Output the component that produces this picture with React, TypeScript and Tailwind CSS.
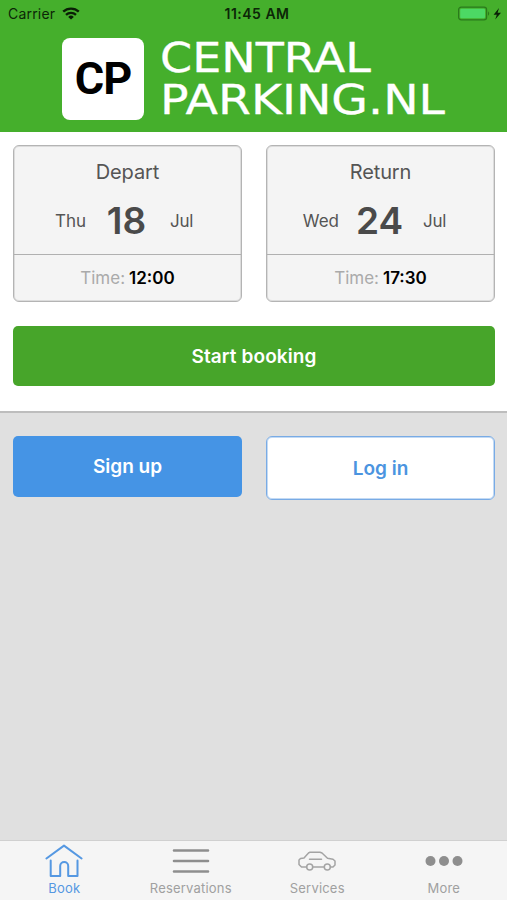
import clsx from "clsx";
import type { ReactNode } from "react";

interface DateCardProps {
  title: string;
  weekday: string;
  day: string;
  month: string;
  time: string;
}

interface TabProps {
  label: string;
  icon: ReactNode;
  active?: boolean;
}

function StatusBar() {
  return (
    <div className="grid h-[27px] grid-cols-3 items-center pr-1 pl-2 text-[14px] text-[#0c2607]">
      <div className="flex items-center gap-[7px]">
        <span className="tracking-[0.2px]">Carrier</span>
        <svg width="18" height="13" viewBox="0 0 18 13" fill="none" stroke="#0a1f06" strokeWidth="2.3">
          <path d="M1.2 4.7a11.2 11.2 0 0 1 15.6 0" />
          <path d="M4 7.9a7.2 7.2 0 0 1 10 0" />
          <path d="M9 12.6 6.2 9.9a4 4 0 0 1 5.6 0Z" fill="#0a1f06" stroke="none" />
        </svg>
      </div>
      <span className="pl-[3px] text-center font-semibold tracking-[0.5px] whitespace-nowrap">11:45 AM</span>
      <svg className="justify-self-end" width="46" height="16" viewBox="0 0 46 16">
        <rect x="1.6" y="1.2" width="28" height="12.6" rx="2.6" fill="none" stroke="#2a7a1c" strokeWidth="1.2" />
        <rect x="3.2" y="2.8" width="24.8" height="9.4" rx="1.2" fill="#4cd964" />
        <path d="M31 5.2q2.4 2.300 0 4.600Z" fill="#2a7a1c" />
        <path d="M42 2 36.600 8.800h3.200L38.200 13.600 44 6.800h-3.400Z" fill="#0a1f06" />
      </svg>
    </div>
  );
}

function Logo() {
  return (
    <div className="flex gap-4 pt-[10.5px] pl-[62px]">
      <div className="flex size-[82px] items-center justify-center rounded-lg bg-white font-[Roboto,sans-serif] text-[45px] leading-none font-bold tracking-[-1px] text-black">
        CP
      </div>
      <svg
        className="-mt-2 overflow-visible"
        width="300"
        height="100"
        viewBox="0 -8 300 100"
        fill="#fff"
        stroke="#fff"
        strokeWidth="0.3"
        fontFamily="'DejaVu Sans', sans-serif"
        fontSize="40"
      >
        <text x="0" y="33.500" textLength="211" lengthAdjust="spacingAndGlyphs">CENTRAL</text>
        <text x="0" y="76" textLength="285" lengthAdjust="spacingAndGlyphs">PARKING.NL</text>
      </svg>
    </div>
  );
}

function DateCard({ title, weekday, day, month, time }: DateCardProps) {
  return (
    <div className="h-[157px] w-[229px] rounded-md border border-[#b4b4b4] bg-[#f4f4f4] text-[#555] shadow-[inset_0_0_0_1px_#dcdcdc]">
      <div className="flex h-[109px] flex-col items-center border-b border-[#b0b0b0] pt-3">
        <div className="text-[20px] leading-7 tracking-[-0.1px]">{title}</div>
        <div className="mt-[10px] grid w-full grid-cols-[72px_81px_1fr] items-center leading-[50px]">
          <span className="text-right text-[17px]">{weekday}</span>
          <span className="text-center text-[37px] font-semibold text-[#4a4a4a]">{day}</span>
          <span className="pl-[3px] text-[17px] tracking-[-0.3px]">{month}</span>
        </div>
      </div>
      <div className="flex h-[47px] items-center justify-center gap-1 text-[17px]">
        <span className="text-[#aaa]">Time:</span>
        <span className="font-semibold text-black">{time}</span>
      </div>
    </div>
  );
}

function Tab({ label, icon, active }: TabProps) {
  return (
    <div className={clsx("flex flex-1 flex-col items-center", active ? "text-[#5598e2]" : "text-[#a0a0a0]")}>
      <div className="flex h-[39px] items-center">{icon}</div>
      <span className="text-[13px] leading-[17px] tracking-[0.2px]">{label}</span>
    </div>
  );
}

function HomeIcon() {
  return (
    <svg width="38" height="34" viewBox="0 0 38 34" fill="none" stroke="currentColor" strokeWidth="2" strokeLinecap="round" strokeLinejoin="round">
      <path d="M1.4 14.5 19 1.6l17.6 12.9" />
      <path d="M5.7 16.5V32h9.5V22a4 4 0 0 1 8 0v10h9.3V16.5" />
    </svg>
  );
}

function ListIcon() {
  return (
    <svg width="38" height="26" viewBox="0 0 38 26" stroke="#8e8e8e" strokeWidth="2.6" strokeLinecap="round">
      <path d="M2 2.5h34M2 13h34M2 23.5h34" />
    </svg>
  );
}

function CarIcon() {
  return (
    <svg width="38" height="20" viewBox="0 0 38 20" fill="none" stroke="#a4a4a4" strokeWidth="1.5" strokeLinecap="round" strokeLinejoin="round">
      <path d="M8.500 16H3.500L1 13.500V9l1.500-1.500L6 7l4.500-5L12 1.200h10l2 .8 5.500 5.200 5.500 1L37 10v4l-2 2h-2.500M15 16h11" />
      <path d="M11.500 8.200h12" />
      <circle cx="11.700" cy="16" r="3" />
      <circle cx="29.300" cy="16" r="3" />
    </svg>
  );
}

function MoreIcon() {
  return (
    <svg width="38" height="12" viewBox="0 0 38 12" fill="#8e8e8e">
      <circle cx="5.500" cy="6" r="5" />
      <circle cx="19" cy="6" r="5" />
      <circle cx="32.500" cy="6" r="5" />
    </svg>
  );
}

export default function App() {
  return (
    <div className="flex h-[900px] w-[507px] flex-col overflow-hidden bg-[#e0e0e0] font-[Inter,sans-serif]">
      <header className="h-[132px] shrink-0 bg-[#45af2c]">
        <StatusBar />
        <Logo />
      </header>

      <section className="flex h-[281px] shrink-0 flex-col border-b-2 border-[#bdbdbd] bg-white pt-[13px] pr-3 pl-[13px]">
        <div className="flex gap-6">
          <DateCard title="Depart" weekday="Thu" day="18" month="Jul" time="12:00" />
          <DateCard title="Return" weekday="Wed" day="24" month="Jul" time="17:30" />
        </div>
        <button className="mt-6 h-[60px] w-full rounded-[5px] bg-[#47a52a] pt-[2px] text-[19px] font-semibold tracking-[0.1px] text-white">
          Start booking
        </button>
      </section>

      <section className="flex flex-1 items-start gap-6 pt-[23px] pr-3 pl-[13px]">
        <button className="h-[61px] w-[229px] rounded-[5px] bg-[#4594e5] pt-[2px] text-[19px] font-semibold text-white">
          Sign up
        </button>
        <button className="h-16 w-[229px] rounded-md border border-[#79abe5] bg-white pt-[2px] text-[19px] font-semibold text-[#4b94e0] shadow-[inset_0_0_0_1px_#c3daf4]">
          Log in
        </button>
      </section>

      <nav className="flex h-[60px] shrink-0 border-t border-[#d0d0d0] bg-[#f5f5f5] pl-px">
        <Tab label="Book" icon={<HomeIcon />} active />
        <Tab label="Reservations" icon={<ListIcon />} />
        <Tab label="Services" icon={<CarIcon />} />
        <Tab label="More" icon={<MoreIcon />} />
      </nav>
    </div>
  );
}
